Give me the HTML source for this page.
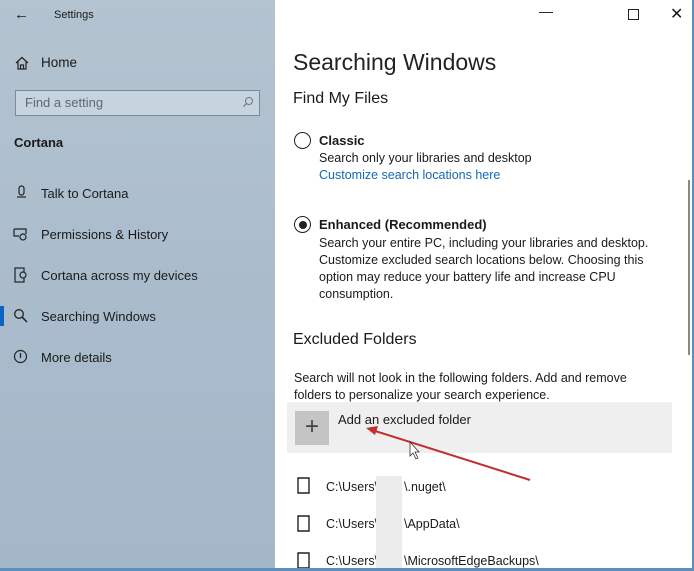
<!DOCTYPE html>
<html><head><style>
body{margin:0;width:694px;height:571px;overflow:hidden;font-family:"Liberation Sans",sans-serif;position:relative;background:#fff}
.side{position:absolute;left:0;top:0;width:275px;height:571px;background:linear-gradient(180deg,#b4c3d0 0%,#aabccc 50%,#a3b7c9 100%)}
.t{position:absolute;white-space:nowrap;color:#1a1a1a}
.ic{position:absolute}
</style></head><body>
<div class="side">
<div class="t" style="left:14px;top:6px;font-size:15px">←</div>
<div class="t" style="left:54px;top:9px;font-size:11px">Settings</div>
<svg class="ic" style="left:15px;top:56px" width="14" height="14" viewBox="0 0 14 14"><path d="M1 7L7 1.5L13 7M3 5.5V13H11V5.5M5.5 13V9H8.5V13" fill="none" stroke="#222" stroke-width="1.2"/></svg>
<div class="t" style="left:41px;top:55px;font-size:13.5px">Home</div>
<div style="position:absolute;left:15px;top:90px;width:243px;height:24px;border:1.5px solid #7a8a98;background:#c7d3de"></div>
<div class="t" style="left:25px;top:95px;font-size:13px;color:#5c6a76">Find a setting</div>
<svg class="ic" style="left:242px;top:96px" width="12" height="12"><circle cx="7" cy="5" r="3.5" fill="none" stroke="#6a7884" stroke-width="1"/><path d="M4.5 7.5L1.5 10.5" stroke="#6a7884" stroke-width="1.2"/></svg>
<div class="t" style="left:14px;top:135px;font-size:13px;font-weight:bold">Cortana</div>
<svg class="ic" style="left:15px;top:185px" width="14" height="16"><rect x="4" y="1" width="5" height="9" rx="2.5" fill="none" stroke="#222" stroke-width="1.2"/><path d="M2 12H11" stroke="#222" stroke-width="1.2"/></svg>
<div class="t" style="left:41px;top:186px;font-size:13px">Talk to Cortana</div>
<svg class="ic" style="left:13px;top:227px" width="16" height="14"><path d="M1 2H13V7M1 2V9H6" fill="none" stroke="#222" stroke-width="1.2"/><circle cx="10" cy="10" r="3" fill="none" stroke="#222" stroke-width="1.2"/></svg>
<div class="t" style="left:41px;top:227px;font-size:13px">Permissions &amp; History</div>
<svg class="ic" style="left:14px;top:267px" width="14" height="16"><rect x="1" y="1" width="9" height="14" fill="none" stroke="#222" stroke-width="1.2"/><circle cx="9" cy="8" r="3" fill="#a9bbcb" stroke="#222" stroke-width="1.2"/></svg>
<div class="t" style="left:41px;top:268px;font-size:13px">Cortana across my devices</div>
<div style="position:absolute;left:0;top:306px;width:4px;height:20px;background:#0a64c8"></div>
<svg class="ic" style="left:13px;top:308px" width="16" height="16"><circle cx="6" cy="6" r="4.3" fill="none" stroke="#222" stroke-width="1.3"/><path d="M9.2 9.2L14 14" stroke="#222" stroke-width="1.5"/></svg>
<div class="t" style="left:41px;top:309px;font-size:13px">Searching Windows</div>
<svg class="ic" style="left:13px;top:349px" width="15" height="15"><circle cx="7.5" cy="7.5" r="6" fill="none" stroke="#222" stroke-width="1.2"/><path d="M7.5 4V9" stroke="#222" stroke-width="1.3"/></svg>
<div class="t" style="left:41px;top:350px;font-size:13px">More details</div>
</div>
<div class="main">
<div class="t" style="left:539px;top:3px;font-size:14px">—</div>
<div style="position:absolute;left:628px;top:9px;width:9px;height:9px;border:1.2px solid #222"></div>
<div class="t" style="left:670px;top:4px;font-size:16px">✕</div>
<div style="position:absolute;left:688px;top:180px;width:2px;height:175px;background:#888"></div>
<div class="t" style="left:293px;top:49px;font-size:23px;color:#222">Searching Windows</div>
<div class="t" style="left:293px;top:90px;font-size:16px">Find My Files</div>
<div style="position:absolute;left:294px;top:132px;width:15px;height:15px;border:1.5px solid #222;border-radius:50%"></div>
<div class="t" style="left:319px;top:133px;font-size:13px;font-weight:bold">Classic</div>
<div class="t" style="left:319px;top:151px;font-size:12.5px">Search only your libraries and desktop</div>
<div class="t" style="left:319px;top:168px;font-size:12.5px;color:#1468b4">Customize search locations here</div>
<div style="position:absolute;left:294px;top:216px;width:15px;height:15px;border:1.5px solid #222;border-radius:50%"><div style="margin:3.5px;width:8px;height:8px;border-radius:50%;background:#222"></div></div>
<div class="t" style="left:319px;top:217px;font-size:13px;font-weight:bold">Enhanced (Recommended)</div>
<div class="t" style="left:319px;top:235px;font-size:12.5px;line-height:17px">Search your entire PC, including your libraries and desktop.<br>Customize excluded search locations below. Choosing this<br>option may reduce your battery life and increase CPU<br>consumption.</div>
<div class="t" style="left:293px;top:331px;font-size:16px">Excluded Folders</div>
<div class="t" style="left:294px;top:370px;font-size:12.5px;line-height:17px">Search will not look in the following folders. Add and remove<br>folders to personalize your search experience.</div>
<div style="position:absolute;left:287px;top:402px;width:385px;height:51px;background:#efefef"></div>
<div style="position:absolute;left:295px;top:411px;width:34px;height:34px;background:#c4c4c4;color:#444;font-size:24px;text-align:center;line-height:32px">+</div>
<div class="t" style="left:338px;top:412px;font-size:13px">Add an excluded folder</div>
<svg style="position:absolute;left:0;top:0" width="694" height="571"><path d="M530 480L372 430" stroke="#c0302e" stroke-width="2"/><path d="M366 428L378 426L375 435Z" fill="#c0302e"/><path d="M410 442V456L413 453L416 459L418 458L415 452H419Z" fill="#fff" stroke="#333" stroke-width="0.8"/></svg>
<svg class="ic" style="left:297px;top:477px" width="14" height="17"><path d="M1 1H12V16H1Z" fill="none" stroke="#222" stroke-width="1.4"/></svg>
<div class="t" style="left:326px;top:480px;font-size:12.5px">C:\Users\</div>
<div class="t" style="left:404px;top:480px;font-size:12.5px">\.nuget\</div>
<svg class="ic" style="left:297px;top:515px" width="14" height="17"><path d="M1 1H12V16H1Z" fill="none" stroke="#222" stroke-width="1.4"/></svg>
<div class="t" style="left:326px;top:517px;font-size:12.5px">C:\Users\</div>
<div class="t" style="left:404px;top:517px;font-size:12.5px">\AppData\</div>
<svg class="ic" style="left:297px;top:552px" width="14" height="17"><path d="M1 1H12V16H1Z" fill="none" stroke="#222" stroke-width="1.4"/></svg>
<div class="t" style="left:326px;top:554px;font-size:12.5px">C:\Users\</div>
<div class="t" style="left:404px;top:554px;font-size:12.5px">\MicrosoftEdgeBackups\</div>
<div style="position:absolute;left:376px;top:476px;width:26px;height:95px;background:#ececec"></div>
<div style="position:absolute;left:692px;top:0;width:2px;height:571px;background:#5b8fc0"></div>
<div style="position:absolute;left:0;top:568px;width:694px;height:3px;background:#5b8fc0"></div>
</div>
</body></html>
